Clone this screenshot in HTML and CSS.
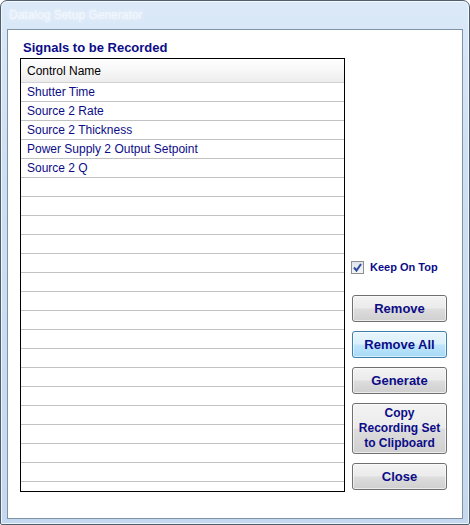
FILE: index.html
```html
<!DOCTYPE html>
<html lang="en">
<head>
  <meta charset="UTF-8">
  <title>Datalog Setup Generator</title>
  <link rel="stylesheet" href="styles.css">
</head>
<body>
  <div class="window">
    <div class="titlebar">Datalog Setup Generator</div>
    <div class="client">
      <div class="signals">
        <h2 class="group-title">Signals to be Recorded</h2>
        <div class="listbox">
          <div class="list-header">Control Name</div>
          <div class="list-row">Shutter Time</div>
          <div class="list-row">Source 2 Rate</div>
          <div class="list-row">Source 2 Thickness</div>
          <div class="list-row">Power Supply 2 Output Setpoint</div>
          <div class="list-row">Source 2 Q</div>
          <div class="list-row"></div>
          <div class="list-row"></div>
          <div class="list-row"></div>
          <div class="list-row"></div>
          <div class="list-row"></div>
          <div class="list-row"></div>
          <div class="list-row"></div>
          <div class="list-row"></div>
          <div class="list-row"></div>
          <div class="list-row"></div>
          <div class="list-row"></div>
          <div class="list-row"></div>
          <div class="list-row"></div>
          <div class="list-row"></div>
          <div class="list-row"></div>
          <div class="list-row"></div>
          <div class="list-row"></div>
        </div>
      </div>

      <div class="actions">
        <label class="keep-on-top">
          <span class="checkbox">
            <svg width="11" height="11" viewBox="0 0 11 11">
              <path d="M2 5.5 L4.5 8.5 L9 2" fill="none" stroke="#2b4a9a" stroke-width="2"/>
            </svg>
          </span>
          Keep On Top
        </label>
        <button class="btn">Remove</button>
        <button class="btn btn-focus">Remove All</button>
        <button class="btn">Generate</button>
        <button class="btn btn-tall">Copy<br>Recording Set<br>to Clipboard</button>
        <button class="btn">Close</button>
      </div>
    </div>
  </div>
</body>
</html>
```

FILE: styles.css
```css
* {
  margin: 0;
  padding: 0;
  box-sizing: border-box;
}
body {
  font-family: 'Liberation Sans', Arial, sans-serif;
  background: #fff;
}
.window {
  width: 470px;
  height: 525px;
  border: 1px solid #4f5e6e;
  border-radius: 7px 7px 2px 2px;
  background: linear-gradient(180deg, #dbe9f8 0%, #cee0f3 30%, #c4d9ef 100%);
  box-shadow: inset 0 0 0 1px rgba(255, 255, 255, 0.7);
  display: flex;
  flex-direction: column;
}
.titlebar {
  height: 28px;
  padding-left: 8px;
  font-size: 12px;
  line-height: 29px;
  color: #f2f7fd;
  text-shadow: 0 0 4px rgba(255, 255, 255, 0.9);
}
.client {
  flex: 1;
  margin: 0 6px 6px;
  background: #fff;
  border: 1px solid #7f92a8;
  display: flex;
  padding: 0 14px 26px 12px;
  gap: 7px;
}
.signals {
  width: 325px;
  display: flex;
  flex-direction: column;
}
.group-title {
  padding: 9px 0 0 3px;
  font-size: 13px;
  line-height: 17px;
  font-weight: bold;
  color: #0c0c87;
}
.listbox {
  margin-top: 2px;
  height: 434px;
  border: 1px solid #000;
  overflow: hidden;
}
.list-header {
  height: 24px;
  padding: 1px 0 0 6px;
  font-size: 12px;
  line-height: 22px;
  color: #000;
  background: linear-gradient(180deg, #ffffff 0%, #f7f7f7 50%, #ececec 100%);
  border-bottom: 1px solid #d2d2d2;
}
.list-row {
  height: 19px;
  padding: 1px 0 0 6px;
  font-size: 12px;
  line-height: 17px;
  color: #0c0c87;
  border-bottom: 1px solid #c2c2c2;
}
.actions {
  width: 95px;
  display: flex;
  flex-direction: column;
  justify-content: flex-end;
  gap: 9px;
  padding-bottom: 2px;
}
.keep-on-top {
  display: flex;
  align-items: center;
  gap: 6px;
  margin: 0 0 11px -1px;
  height: 16px;
  font-size: 11px;
  font-weight: bold;
  color: #0c0c87;
  white-space: nowrap;
}
.checkbox {
  width: 13px;
  height: 13px;
  border: 1px solid #8e8f8f;
  background: linear-gradient(180deg, #dfe4ec 0%, #f4f6f9 100%);
  display: flex;
  align-items: center;
  justify-content: center;
}
.btn {
  height: 27px;
  width: 95px;
  border: 1px solid #707070;
  border-radius: 3px;
  background: linear-gradient(180deg, #f3f3f3 0%, #ebebeb 48%, #dddddd 52%, #cfcfcf 100%);
  font-family: 'Liberation Sans', Arial, sans-serif;
  font-size: 13px;
  font-weight: bold;
  color: #0c0c87;
  box-shadow: inset 0 0 0 1px rgba(255, 255, 255, 0.6);
}
.btn-focus {
  border-color: #3c7fb1;
  background: linear-gradient(180deg, #eaf6fd 0%, #d9f0fc 48%, #bee6fd 52%, #a7d9f5 100%);
}
.btn-tall {
  height: 51px;
  font-size: 12px;
  line-height: 15px;
}
```
